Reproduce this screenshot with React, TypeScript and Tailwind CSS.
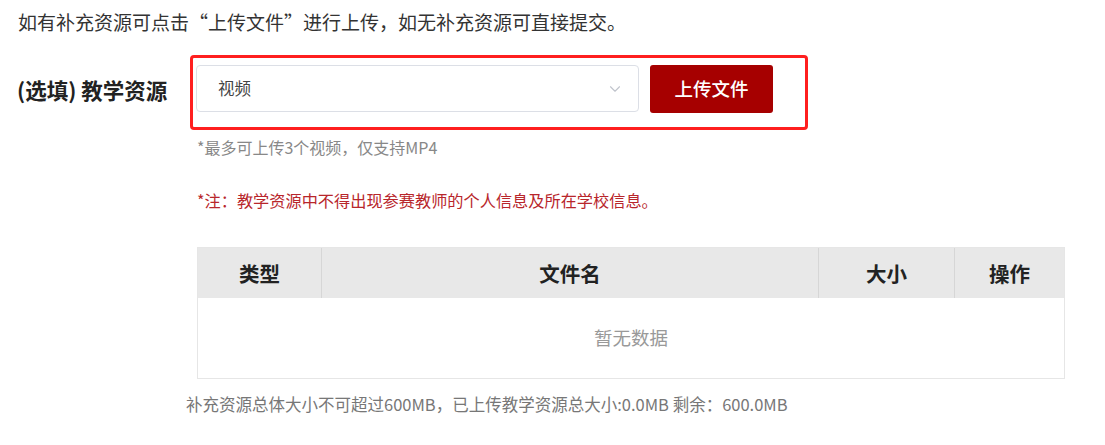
import { ChevronDown } from 'lucide-react';

const columns = [
    { name: '类型', width: 'w-[123px]' },
    { name: '文件名', width: 'flex-1' },
    { name: '大小', width: 'w-[136px]' },
    { name: '操作', width: 'w-[110px]' },
];

export default function App() {
    return (
        <div className="w-[1105px] h-[445px] bg-white font-['Noto_Sans_CJK_SC','Noto_Sans',sans-serif]">
            <p className="pl-[18px] pt-[9px] text-[19px] leading-[26px] text-[#333]">
                如有补充资源可点击“上传文件”进行上传，如无补充资源可直接提交。
            </p>

            {/* resource row */}
            <div className="flex mt-[20px]">
                <div className="w-[190px] h-[75px] pl-[17px] pb-[4px] flex items-center text-[21.5px] font-bold text-[#222]">
                    (选填) 教学资源
                </div>
                <div className="w-[618px] h-[75px] border-[3px] border-[#ff1f1f] rounded-[4px] flex items-start pt-[7px] pl-[3px] gap-[11px]">
                    <div className="w-[443px] h-[47px] border border-[#dcdfe6] rounded-[4px] flex items-center justify-between pl-[21px] pr-[14px]">
                        <span className="text-[16.5px] text-[#444]">视频</span>
                        <ChevronDown className="w-[18px] h-[18px] text-[#c0c4cc]" strokeWidth={1.5} />
                    </div>
                    <button className="w-[123px] h-[48px] bg-[#a60000] rounded-[3px] text-white text-[18.5px] font-medium">
                        上传文件
                    </button>
                </div>
            </div>

            <div className="ml-[197px]">
                <p className="mt-[6px] text-[16px] leading-[22px] text-[#888]">*最多可上传3个视频，仅支持MP4</p>
                <p className="mt-[31px] text-[16.2px] leading-[22px] text-[#b8262b]">
                    *注：教学资源中不得出现参赛教师的个人信息及所在学校信息。
                </p>

                {/* table */}
                <div className="mt-[36px] w-[868px] border border-[#e6e6e6]">
                    <div className="flex h-[50px] bg-[#e8e8e8]">
                        {columns.map((col, i) => (
                            <div
                                key={col.name}
                                className={`${col.width} flex items-center justify-center text-[20.5px] font-bold text-[#222] ${
                                    i > 0 ? 'border-l border-[#d6d6d6]' : ''
                                }`}
                            >
                                {col.name}
                            </div>
                        ))}
                    </div>
                    <div className="h-[80px] flex items-center justify-center text-[18.5px] text-[#999]">暂无数据</div>
                </div>
            </div>

            <p className="ml-[186px] mt-[14px] text-[16.5px] leading-[22px] text-[#777]">
                补充资源总体大小不可超过600MB，已上传教学资源总大小:0.0MB 剩余：600.0MB
            </p>
        </div>
    );
}
